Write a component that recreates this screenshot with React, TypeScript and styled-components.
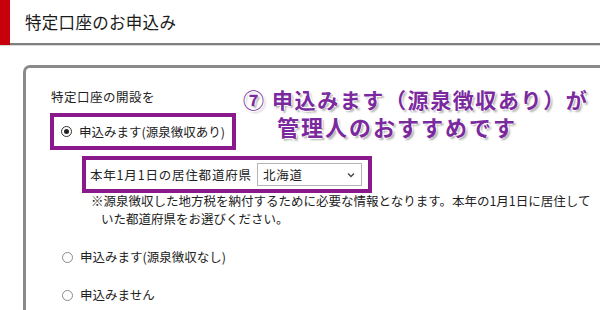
import React from "react";
import styled, { createGlobalStyle } from "styled-components";

const Global = createGlobalStyle`
  html, body { margin: 0; padding: 0; background: #fff; }
  body {
    width: 600px; height: 310px; overflow: hidden;
    font-family: "Noto Sans CJK JP", "Noto Sans", sans-serif;
    color: #222;
  }
`;

const Page = styled.div`
  position: relative;
  width: 600px;
  height: 310px;
  overflow: hidden;
`;

const Header = styled.header`
  display: flex;
  align-items: center;
  height: 43px;
  border-bottom: 2px solid #7f7f7f;
  box-shadow: 0 1px 0 #d8d8d8;
`;

const RedBar = styled.div`
  width: 10px;
  align-self: stretch;
  margin-bottom: -2px;
  background: #c8000b;
`;

const Title = styled.h1`
  margin: 0 0 0 15px;
  font-size: 16.5px;
  font-weight: 400;
  line-height: 1;
  color: #1a1a1a;
  padding-top: 1px;
  letter-spacing: 0.3px;
`;

const Panel = styled.section`
  margin: 20px 0 0 23px;
  border-top: 3px solid #8a8a8a;
  border-left: 3px solid #8a8a8a;
  border-top-left-radius: 7px;
  padding: 20px 0 0 0;
  height: 400px;
`;

const Label = styled.div`
  margin-left: 25px;
  font-size: 12.5px;
  line-height: 18px;
  margin-bottom: 7px;
  letter-spacing: 0.5px;
`;

const Highlight = styled.div<{ $ml: number; $w: number; $mt?: number }>`
  box-sizing: border-box;
  margin-left: ${(p) => p.$ml}px;
  margin-top: ${(p) => p.$mt ?? 0}px;
  width: ${(p) => p.$w}px;
  height: 37px;
  border: 4px solid #8a1a8c;
  display: flex;
  align-items: center;
`;

const RadioRow = styled.label<{ $ml: number; $mt?: number }>`
  display: flex;
  align-items: center;
  margin-left: ${(p) => p.$ml}px;
  margin-top: ${(p) => p.$mt ?? 0}px;
  font-size: 12.5px;
  line-height: 18px;
  white-space: nowrap;
`;

const Radio = styled.span<{ $checked?: boolean }>`
  box-sizing: border-box;
  width: 11px;
  height: 11px;
  border-radius: 50%;
  border: 1px solid ${(p) => (p.$checked ? "#333" : "#8a8a8a")};
  background: #fff;
  margin-right: 7px;
  display: inline-flex;
  align-items: center;
  justify-content: center;
  &::after {
    content: "";
    width: 5px;
    height: 5px;
    border-radius: 50%;
    background: ${(p) => (p.$checked ? "#222" : "transparent")};
  }
`;

const FieldLabel = styled.span`
  font-size: 12.5px;
  margin-left: 4px;
  white-space: nowrap;
  letter-spacing: 0.8px;
`;

const Select = styled.div`
  box-sizing: border-box;
  margin-left: auto;
  margin-right: 6px;
  width: 105px;
  height: 23px;
  border: 1px solid #b4b4b4;
  background: #fff;
  display: flex;
  align-items: center;
  padding: 0 6px 0 5px;
  font-size: 12.5px;
  letter-spacing: 0.8px;
  justify-content: space-between;
`;

const Notes = styled.div`
  margin: -1px 0 0 65px;
  font-size: 12.5px;
  line-height: 18px;
  white-space: nowrap;
`;

const NoteIndent = styled.div`
  padding-left: 10px;
`;

const Callout = styled.div`
  position: absolute;
  left: 243px;
  top: 86px;
  color: #7a2a9e;
  font-weight: 700;
  font-size: 21px;
  line-height: 27px;
  letter-spacing: 1.6px;
  white-space: nowrap;
  text-shadow: -1px -1px 0 #fff, 1px -1px 0 #fff, -1px 1px 0 #fff,
    2px 2px 2px rgba(0, 0, 0, 0.3);
`;

const CalloutIndent = styled.div`
  padding-left: 34px;
  font-size: 22px;
  letter-spacing: 2px;
`;

const Chevron = () => (
  <svg width="8" height="6" viewBox="0 0 8 6" aria-hidden>
    <path d="M1 1.5 L4 4.5 L7 1.5" fill="none" stroke="#444" strokeWidth="1.3" />
  </svg>
);

export default function App() {
  return (
    <Page>
      <Global />
      <Header>
        <RedBar />
        <Title>特定口座のお申込み</Title>
      </Header>
      <Panel>
        <Label>特定口座の開設を</Label>
        <Highlight $ml={24} $w={186}>
          <RadioRow $ml={7}>
            <Radio $checked />
            申込みます(源泉徴収あり)
          </RadioRow>
        </Highlight>
        <Highlight $ml={56} $w={290} $mt={6}>
          <FieldLabel>本年1月1日の居住都道府県</FieldLabel>
          <Select>
            <span>北海道</span>
            <Chevron />
          </Select>
        </Highlight>
        <Notes>
          ※源泉徴収した地方税を納付するために必要な情報となります。本年の1月1日に居住して
          <NoteIndent>いた都道府県をお選びください。</NoteIndent>
        </Notes>
        <RadioRow $ml={36} $mt={20}>
          <Radio />
          申込みます(源泉徴収なし)
        </RadioRow>
        <RadioRow $ml={36} $mt={20}>
          <Radio />
          申込みません
        </RadioRow>
      </Panel>
      <Callout>
        ⑦ 申込みます（源泉徴収あり）が
        <CalloutIndent>管理人のおすすめです</CalloutIndent>
      </Callout>
    </Page>
  );
}
